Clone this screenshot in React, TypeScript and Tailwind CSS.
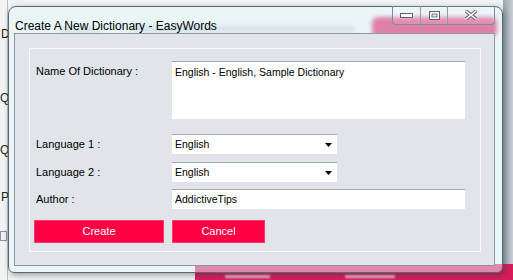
export default function App() {
  return (
    <div className="relative w-[513px] h-[280px] overflow-hidden bg-[#f2f3f3] font-['Liberation_Sans',Arial,sans-serif]">
      {/* ─── Aplicación de fondo, vista a través del vidrio ─── */}
      <div className="absolute left-[7px] top-0 w-px h-[280px] bg-[#b9c0c4]" />
      <div className="absolute left-[503px] top-0 w-[10px] h-[280px] bg-gradient-to-r from-[#9aa6ae] to-[#c9d0d4]" />
      <span className="absolute left-[1px] top-[25px] text-[12px] text-[#3a1010]">D</span>
      <span className="absolute left-[0px] top-[89px] text-[12px] text-[#222]">Q</span>
      <span className="absolute left-[0px] top-[141px] text-[12px] text-[#222]">Q</span>
      <span className="absolute left-[1px] top-[188px] text-[12px] text-[#222]">P</span>
      <span className="absolute left-[0px] top-[231px] w-[7px] h-[10px] border border-[#8a9298] bg-[#eef1f3]" />
      <div className="absolute left-[372px] top-[17px] w-[125px] h-[20px] rounded-[6px] bg-[#dc0a50] blur-[2px]" />
      <div className="absolute left-[60px] top-[27px] w-[40px] h-[5px] bg-[#9aa9b8] blur-[2px] opacity-60" />
      <div className="absolute left-[130px] top-[26px] w-[225px] h-[6px] bg-[#9aa9b8] blur-[2px] opacity-50" />
      <div className="absolute left-[195px] top-[264px] w-[318px] h-[16px] bg-[#d81c5a]" />
      <div className="absolute left-[225px] top-[275px] w-[45px] h-[3px] bg-white/70 blur-[1px]" />
      <div className="absolute left-[345px] top-[275px] w-[50px] h-[3px] bg-white/70 blur-[1px]" />

      {/* ─── Ventana ─── */}
      <div className="absolute left-[8px] top-[6px] w-[495px] h-[267px] flex flex-col rounded-t-[8px] rounded-b-[6px] border border-[#5a6870] bg-[#e2f8fb]/50 pl-[5px] pr-[7px] pb-[6px] shadow-[2px_2px_6px_rgba(40,50,60,0.45)]">
        <div className="relative h-[26px] pl-[1px] pt-[6px]">
          <span className="text-[12px] text-black leading-[16px]">Create A New Dictionary - EasyWords</span>
          {/* botones de título */}
          <div className="absolute right-0 -top-px flex h-[19px] rounded-b-[4px] border border-t-0 border-[#7e8d96] bg-white/10 overflow-hidden">
            <div className="w-[28px] flex items-center justify-center border-r border-[#8d9ba3]">
              <svg width="13" height="5" viewBox="0 0 13 5">
                <rect x="0.5" y="0.5" width="12" height="4" fill="#fafafa" stroke="#5d6469" />
              </svg>
            </div>
            <div className="w-[27px] flex items-center justify-center border-r border-[#8d9ba3]">
              <svg width="11" height="9" viewBox="0 0 11 9">
                <rect x="0.5" y="0.5" width="10" height="8" fill="#fafafa" stroke="#5d6469" />
                <rect x="3" y="3" width="5" height="3" fill="#dfe4e7" stroke="#5d6469" strokeWidth="0.8" />
              </svg>
            </div>
            <div className="w-[46px] flex items-center justify-center">
              <svg width="12" height="10" viewBox="0 0 12 10">
                <path d="M1,1 L11,9 M11,1 L1,9" stroke="#5d6469" strokeWidth="3.4" strokeLinecap="square" />
                <path d="M1,1 L11,9 M11,1 L1,9" stroke="#fafafa" strokeWidth="1.6" strokeLinecap="square" />
              </svg>
            </div>
          </div>
        </div>

        {/* área cliente */}
        <div className="flex-1 border border-[#8c979e] bg-[#e1e4e8] pl-[14px] pt-[14px] pr-[13px] pb-[13px]">
          <div className="h-full border border-[#f7f9fa] pl-[6px] pt-[12px] pr-[15px] text-[11px] text-black">
            <div className="grid grid-cols-[136px_1fr] items-center">
              <div className="self-start pt-[2px]">Name Of Dictionary :</div>
              <div className="h-[58px] bg-white border-t border-[#a5a9ad] pl-[3px] pt-[3px] text-[10.5px]">
                English - English, Sample Dictionary
              </div>

              <div className="mt-[15px]">Language 1 :</div>
              <div className="mt-[15px] w-[165px] h-[20px] bg-white border-t border-[#a5a9ad] pl-[3px] flex items-center justify-between text-[10.5px]">
                <span>English</span>
                <svg width="7" height="4" viewBox="0 0 7 4" className="mr-[5px]">
                  <path d="M0,0 L7,0 L3.5,4 Z" fill="#000" />
                </svg>
              </div>

              <div className="mt-[8px]">Language 2 :</div>
              <div className="mt-[8px] w-[165px] h-[20px] bg-white border-t border-[#a5a9ad] pl-[3px] flex items-center justify-between text-[10.5px]">
                <span>English</span>
                <svg width="7" height="4" viewBox="0 0 7 4" className="mr-[5px]">
                  <path d="M0,0 L7,0 L3.5,4 Z" fill="#000" />
                </svg>
              </div>

              <div className="mt-[7px]">Author :</div>
              <div className="mt-[7px] h-[20px] bg-white border-t border-[#a5a9ad] pl-[3px] flex items-center text-[10.5px]">
                AddictiveTips
              </div>
            </div>

            <div className="mt-[11px] -ml-[2px] flex gap-[8px]">
              <button className="w-[130px] h-[23px] bg-[#ff0044] text-white text-[11px] border border-[#ff3a6a]">
                Create
              </button>
              <button className="w-[93px] h-[23px] bg-[#ff0044] text-white text-[11px] border border-[#ff3a6a]">
                Cancel
              </button>
            </div>
          </div>
        </div>
      </div>
    </div>
  );
}
